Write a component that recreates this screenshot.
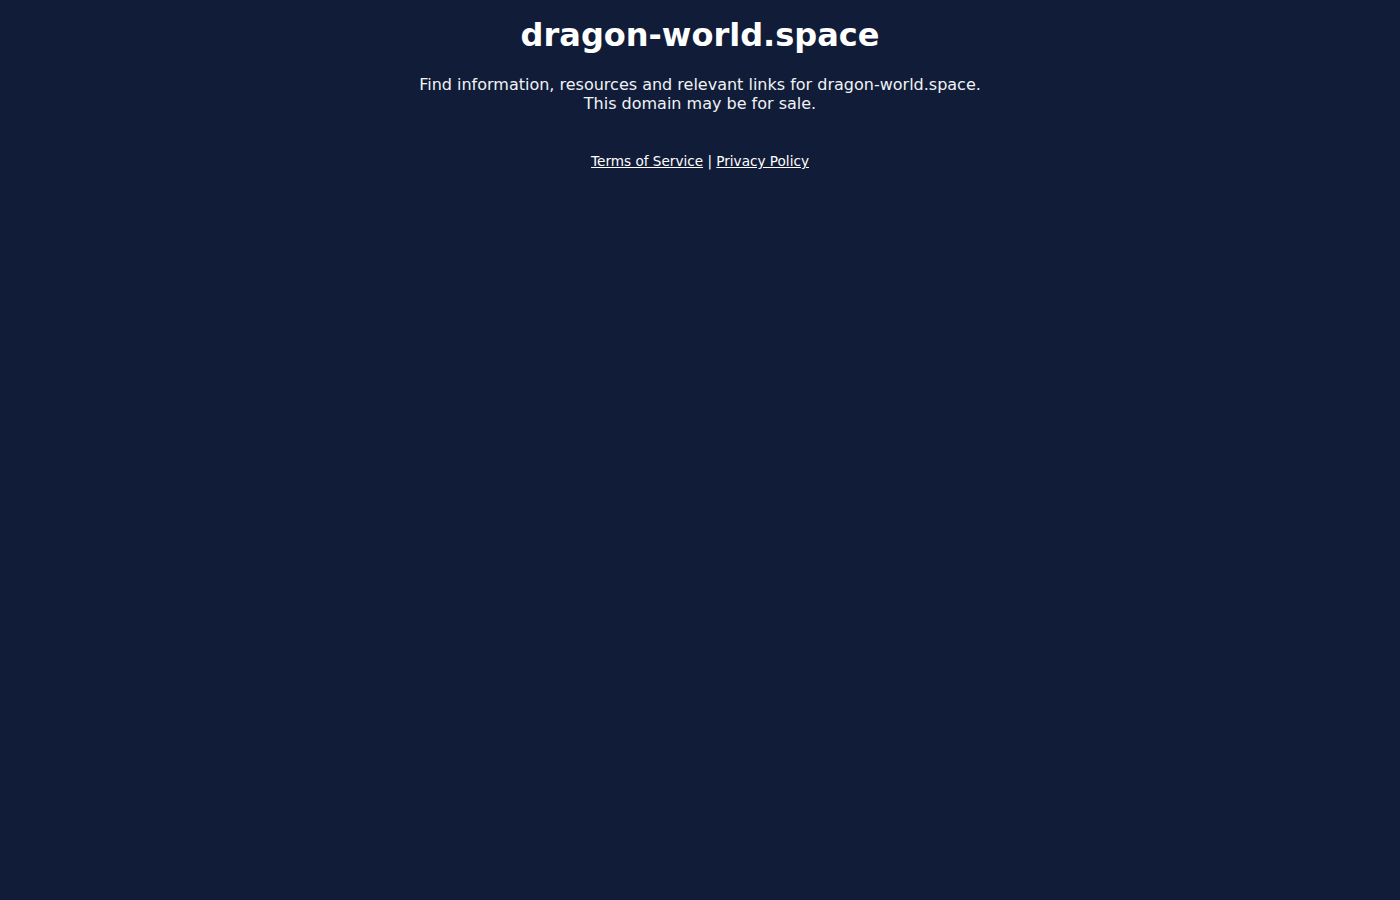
export default function App() {
  return (
    <div
      className="min-h-screen w-full bg-[#111d38] text-white text-center pt-[17px]"
      style={{ fontFamily: '"DejaVu Sans", sans-serif' }}
    >
      <h1 className="text-[32px] font-bold leading-[37px]">dragon-world.space</h1>
      <p className="mt-[21px] text-[16px] leading-[19px] text-[#f0f2f6]">
        Find information, resources and relevant links for dragon-world.space.
        <br />
        This domain may be for sale.
      </p>
      <div className="mt-[40px] text-[13.6px] leading-[16px]">
        <a href="#" className="underline text-white">Terms of Service</a>
        {" | "}
        <a href="#" className="underline text-white">Privacy Policy</a>
      </div>
    </div>
  );
}
